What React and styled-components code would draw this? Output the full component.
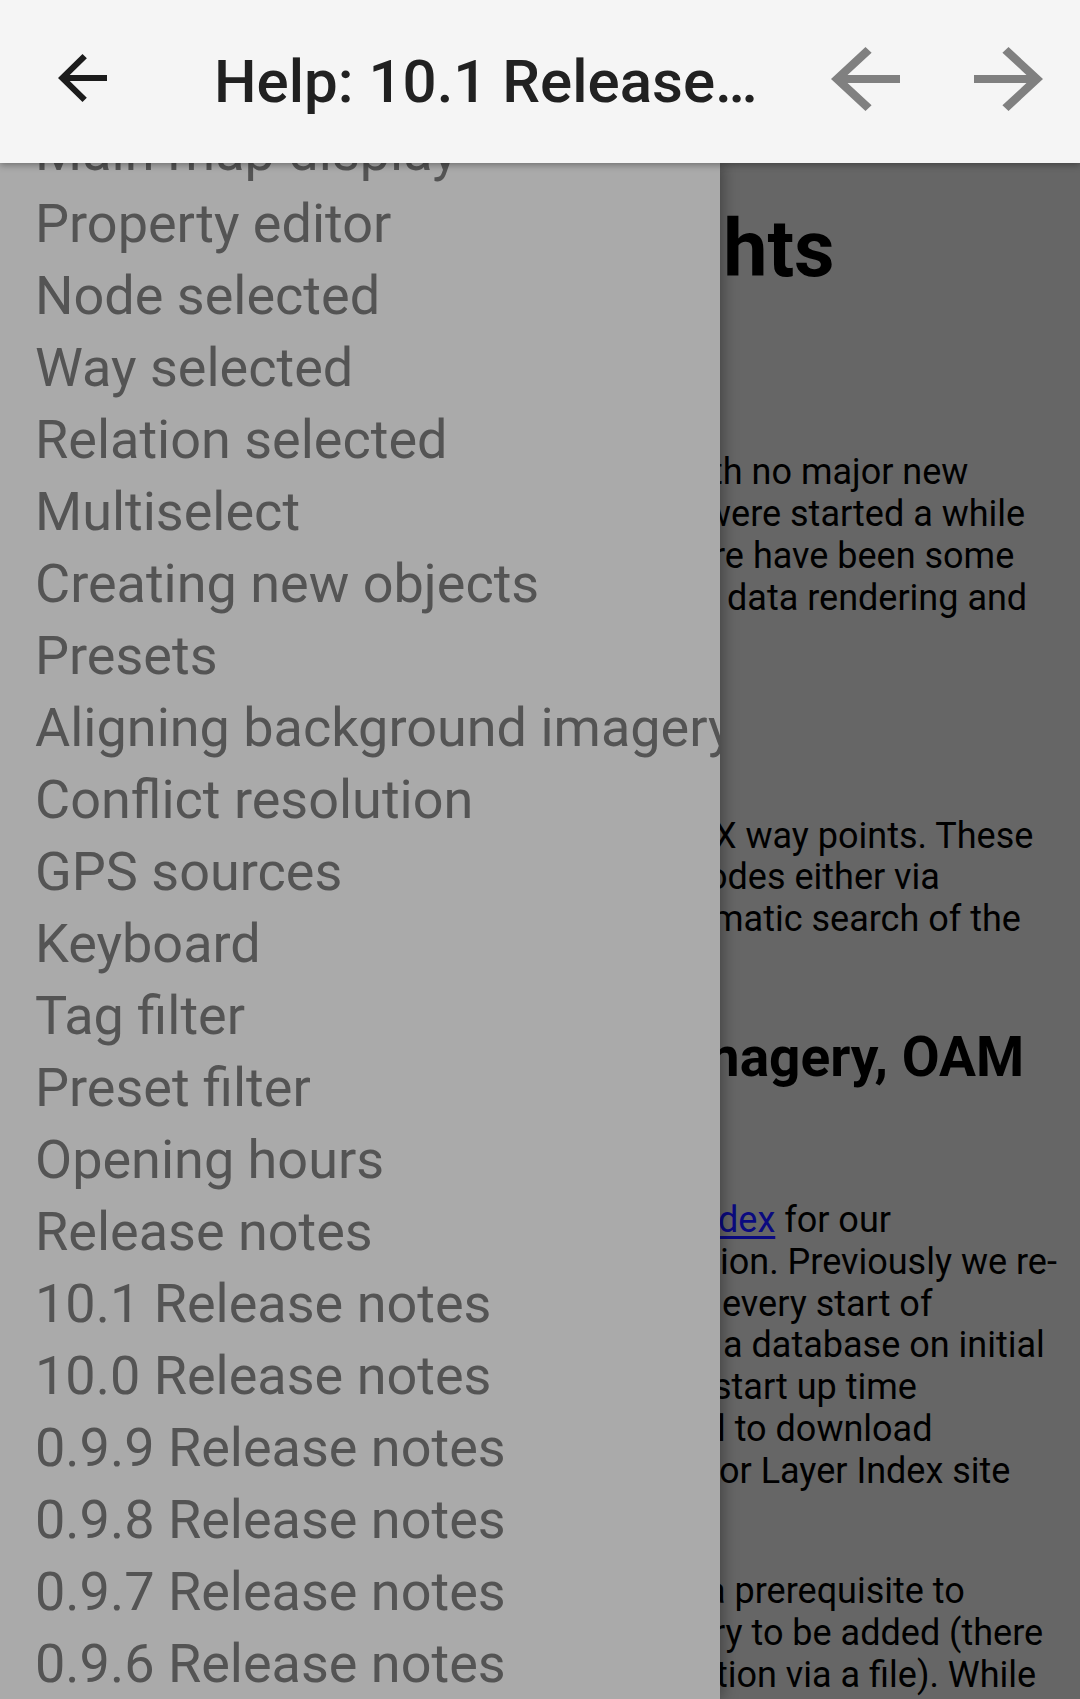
import React, { useLayoutEffect, useRef } from 'react';
import styled, { createGlobalStyle } from 'styled-components';

const GlobalStyle = createGlobalStyle`
  html, body {
    margin: 0;
    padding: 0;
    height: 100%;
  }
  body {
    font-family: Roboto, "Noto Sans", "Liberation Sans", sans-serif;
    background: #666666;
    overflow: hidden;
  }
  #root {
    height: 100%;
  }
`;

const HELP_TOPICS = [
  'Introduction',
  'Main map display',
  'Property editor',
  'Node selected',
  'Way selected',
  'Relation selected',
  'Multiselect',
  'Creating new objects',
  'Presets',
  'Aligning background imagery',
  'Conflict resolution',
  'GPS sources',
  'Keyboard',
  'Tag filter',
  'Preset filter',
  'Opening hours',
  'Release notes',
  '10.1 Release notes',
  '10.0 Release notes',
  '0.9.9 Release notes',
  '0.9.8 Release notes',
  '0.9.7 Release notes',
  '0.9.6 Release notes',
  '0.9.5 Release notes',
  '0.9.4 Release notes',
];

// drawer is scrolled so that "Main map display" sits half under the toolbar
const DRAWER_SCROLL = 119;

// what shows of the page beside the open drawer: each line starts at x
const ARTICLE = [
  { kind: 'h1', gap: 40, lines: [[678, 'ghts']] },
  {
    kind: 'p',
    gap: 155,
    lines: [
      [711, 'th no major new'],
      [704, 'were started a while'],
      [713, 're have been some'],
      [727, 'data rendering and'],
    ],
  },
  {
    kind: 'p',
    gap: 196,
    lines: [
      [714, 'X way points. These'],
      [707, 'odes either via'],
      [712, 'matic search of the'],
    ],
  },
  { kind: 'h2', gap: 84, lines: [[692, 'magery, OAM']] },
  {
    kind: 'p',
    gap: 110,
    lines: [
      [718, 'link'],
      [720, 'ion. Previously we re-'],
      [722, 'every start of'],
      [723, 'a database on initial'],
      [713, 'start up time'],
      [717, 'l to download'],
      [719, 'or Layer Index site'],
    ],
  },
  {
    kind: 'p',
    gap: 78,
    lines: [
      [706, 'a prerequisite to'],
      [713, 'ry to be added (there'],
      [716, 'tion via a file). While'],
    ],
  },
];

function ArrowBack({ color, width, height }) {
  return (
    <svg width={width} height={height} viewBox="4 4 16 16" preserveAspectRatio="none">
      <path fill={color} d="M20 11H7.83l5.59-5.59L12 4l-8 8 8 8 1.41-1.41L7.83 13H20v-2z" />
    </svg>
  );
}

function ArrowForward({ color, width, height }) {
  return (
    <svg width={width} height={height} viewBox="4 4 16 16" preserveAspectRatio="none">
      <path fill={color} d="M12 4l-1.41 1.41L16.17 11H4v2h12.17l-5.58 5.59L12 20l8-8z" />
    </svg>
  );
}

function App() {
  const drawerRef = useRef(null);

  useLayoutEffect(() => {
    if (drawerRef.current) {
      drawerRef.current.scrollTop = DRAWER_SCROLL;
    }
  }, []);

  return (
    <>
      <GlobalStyle />
      <StScreen>
        <StToolbar>
          <StNavButton aria-label="Back">
            <ArrowBack color="#1c1c1c" width={49} height={48} />
          </StNavButton>
          <StTitle>Help: 10.1 Release…</StTitle>
          <StActions>
            <StActionButton aria-label="Previous">
              <ArrowBack color="#808080" width={69} height={64} />
            </StActionButton>
            <StActionButton aria-label="Next">
              <ArrowForward color="#808080" width={69} height={64} />
            </StActionButton>
          </StActions>
        </StToolbar>

        <StMain>
          <StArticle>
            {ARTICLE.map((block, i) => {
              if (block.kind === 'h1') {
                return (
                  <StH1 key={i} $gap={block.gap}>
                    {block.lines.map(([x, text]) => (
                      <StLine key={text} $x={x}>{text}</StLine>
                    ))}
                  </StH1>
                );
              }
              if (block.kind === 'h2') {
                return (
                  <StH2 key={i} $gap={block.gap}>
                    {block.lines.map(([x, text]) => (
                      <StLine key={text} $x={x}>{text}</StLine>
                    ))}
                  </StH2>
                );
              }
              return (
                <StPara key={i} $gap={block.gap}>
                  {block.lines.map(([x, text]) =>
                    text === 'link' ? (
                      <StLine key={text} $x={x}>
                        <StLink href="#">dex</StLink> for our
                      </StLine>
                    ) : (
                      <StLine key={text} $x={x}>{text}</StLine>
                    )
                  )}
                </StPara>
              );
            })}
          </StArticle>

          <StDrawer ref={drawerRef}>
            <StTopicList>
              {HELP_TOPICS.map((topic) => (
                <StTopic key={topic}>{topic}</StTopic>
              ))}
            </StTopicList>
          </StDrawer>
        </StMain>
      </StScreen>
    </>
  );
}

export default App;

const StScreen = styled.div`
  display: flex;
  flex-direction: column;
  height: 100vh;
  width: 1080px;
  overflow: hidden;
`;

const StToolbar = styled.header`
  position: relative;
  z-index: 3;
  flex-shrink: 0;
  height: 163px;
  display: flex;
  align-items: center;
  background: #f5f5f5;
  box-shadow: 0 2px 7px rgba(0, 0, 0, 0.35);
`;

const StNavButton = styled.div`
  width: 165px;
  height: 100%;
  display: flex;
  align-items: center;
  justify-content: center;
  padding-bottom: 7px;
  box-sizing: border-box;
  flex-shrink: 0;
`;

const StTitle = styled.h1`
  margin: 0 0 0 49px;
  flex: 1;
  min-width: 0;
  font-family: Roboto, "Noto Sans", sans-serif;
  font-size: 60px;
  font-weight: 500;
  color: #212121;
  white-space: nowrap;
  overflow: hidden;
`;

const StActions = styled.div`
  display: flex;
  height: 100%;
  flex-shrink: 0;
`;

const StActionButton = styled.div`
  width: 143px;
  height: 100%;
  display: flex;
  align-items: center;
  justify-content: center;
  padding-bottom: 5px;
  box-sizing: border-box;
`;

const StMain = styled.main`
  position: relative;
  flex: 1;
  overflow: hidden;
  background: #666666;
`;

const StArticle = styled.article`
  color: #000;
  font-family: Roboto, "Noto Sans", sans-serif;
  padding-top: 0.1px;
`;

const StLine = styled.div`
  white-space: pre;
  padding-left: ${(p) => p.$x}px;
`;

const StH1 = styled.h1`
  margin: ${(p) => p.$gap}px 0 0;
  font-size: 79px;
  line-height: 93.8px;
  font-weight: 700;
`;

const StH2 = styled.h2`
  margin: ${(p) => p.$gap}px 0 0;
  font-size: 55px;
  line-height: 64.5px;
  font-weight: 700;
`;

const StPara = styled.p`
  margin: ${(p) => p.$gap}px 0 0;
  font-size: 36px;
  line-height: 41.9px;
`;

const StLink = styled.a`
  color: #0a0a80;
  text-decoration: underline;
  text-decoration-thickness: 3px;
  text-underline-offset: 4px;
`;

const StDrawer = styled.nav`
  position: absolute;
  top: 0;
  left: 0;
  bottom: 0;
  width: 720px;
  z-index: 2;
  background: #aaaaaa;
  box-shadow: 3px 0 14px rgba(0, 0, 0, 0.35);
  overflow-x: hidden;
  overflow-y: auto;
  scrollbar-width: none;

  &::-webkit-scrollbar {
    display: none;
  }
`;

const StTopicList = styled.ul`
  list-style: none;
  margin: 0;
  padding: 0;
`;

const StTopic = styled.li`
  padding-left: 35px;
  height: 72px;
  line-height: 72px;
  font-family: Roboto, "Noto Sans", sans-serif;
  font-size: 54px;
  color: #545454;
  white-space: nowrap;
`;
